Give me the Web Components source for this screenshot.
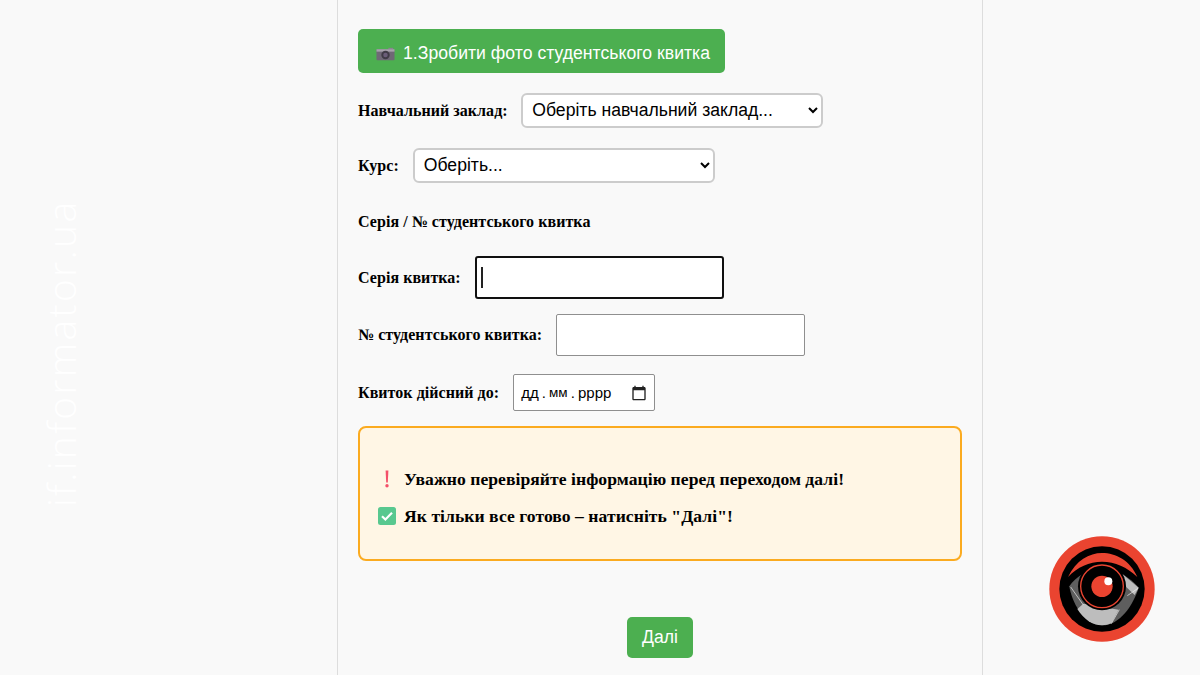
<!DOCTYPE html>
<html lang="uk">
<head>
<meta charset="utf-8">
<title>Студентський квиток</title>
<style>
  html, body { margin: 0; height: 675px; overflow: hidden; background: #f9f9f9; }
  body { font-family: "Liberation Serif", "Times New Roman", serif; color: #000; }
</style>
</head>
<body>
<ticket-page>
  <green-button icon="camera" size="wide">1.Зробити фото студентського квитка</green-button>

  <form-row label="Навчальний заклад:" style="margin-top:20px">
    <choice-field text="Оберіть навчальний заклад..." style="margin-left:-.4px"></choice-field>
  </form-row>
  <form-row label="Курс:" style="margin-top:20px">
    <choice-field text="Оберіть..."></choice-field>
  </form-row>

  <form-row label="Серія / № студентського квитка" style="margin-top:30px"></form-row>

  <form-row label="Серія квитка:" style="margin-top:25px">
    <text-field focused></text-field>
  </form-row>
  <form-row label="№ студентського квитка:" style="margin-top:15px">
    <text-field></text-field>
  </form-row>
  <form-row label="Квиток дійсний до:" style="margin-top:18px">
    <date-field></date-field>
  </form-row>

  <note-box style="margin-top:15px">
    <note-line icon="warn">Уважно перевіряйте інформацію перед переходом далі!</note-line>
    <note-line icon="check">Як тільки все готово – натисніть "Далі"!</note-line>
  </note-box>

  <next-bar style="margin-top:56px">
    <green-button>Далі</green-button>
  </next-bar>
</ticket-page>
<site-mark></site-mark>
<eye-logo></eye-logo>

<script>
const ICONS = {
  camera: `<svg width="19" height="14" viewBox="0 0 20 14">
    <rect x="13" y="0.5" width="5" height="2" fill="#8a8490"/>
    <rect x="0.5" y="2" width="19" height="11.5" rx="1" fill="#6f6876"/>
    <rect x="0.5" y="2" width="19" height="2.5" fill="#a8a2ad"/>
    <circle cx="10" cy="8" r="4.4" fill="#3f3a46"/>
    <circle cx="10" cy="8" r="2.4" fill="#6a5d78"/>
  </svg>`,
  warn: `<svg width="18" height="18" viewBox="0 0 18 18">
    <path d="M7.6 0.5h2.8L9.8 12.4H8.2z" fill="#f4506a"/>
    <circle cx="9" cy="15.7" r="1.7" fill="#f4506a"/>
  </svg>`,
  check: `<svg width="18" height="18" viewBox="0 0 18 18">
    <rect width="18" height="18" rx="2.5" fill="#58c88f"/>
    <path d="M4 9.2l3.4 3.3L14 5.8" fill="none" stroke="#fff" stroke-width="2.2"/>
  </svg>`
};

class TicketPage extends HTMLElement {
  connectedCallback() {
    this.attachShadow({ mode: 'open' }).innerHTML = `
      <style>
        :host { display: grid; grid-template-columns: 337px 646px 1fr; height: 675px; }
        .col {
          grid-column: 2;
          box-sizing: border-box;
          border-left: 1px solid #ddd;
          border-right: 1px solid #ddd;
          padding: 29px 20px 0;
          display: flex;
          flex-direction: column;
          align-items: stretch;
        }
      </style>
      <main class="col"><slot></slot></main>
    `;
  }
}

class GreenButton extends HTMLElement {
  connectedCallback() {
    const icon = this.getAttribute('icon');
    this.attachShadow({ mode: 'open' }).innerHTML = `
      <style>
        :host { display: block; width: fit-content; }
        button {
          display: flex;
          align-items: center;
          gap: 8px;
          border: 0;
          border-radius: 5px;
          background: #4caf50;
          color: #fff;
          font: 17.6px "Liberation Sans", Arial, sans-serif;
          padding: 0 15px;
          height: 41px;
        }
        :host([size=wide]) button { height: 44px; padding: 5px 15px 0 18px; letter-spacing: .03px; }
        svg { display: block; }
      </style>
      <button type="button">${icon ? ICONS[icon] : ''}<slot></slot></button>
    `;
  }
}

class FormRow extends HTMLElement {
  connectedCallback() {
    this.attachShadow({ mode: 'open' }).innerHTML = `
      <style>
        :host { display: flex; align-items: center; gap: 14px; }
        label { font: bold 16px/18px "Liberation Serif", "Times New Roman", serif; letter-spacing: .05px; }
      </style>
      <label>${this.getAttribute('label')}</label>
      <slot></slot>
    `;
  }
}

class ChoiceField extends HTMLElement {
  connectedCallback() {
    this.attachShadow({ mode: 'open' }).innerHTML = `
      <style>
        :host { display: block; }
        select {
          display: block;
          box-sizing: border-box;
          width: 302px;
          height: 35px;
          padding: 0 5px 2px;
          background: #fff;
          color: #000;
          border: 2px solid #ccc;
          border-radius: 6px;
          font: 17.6px "Liberation Sans", Arial, sans-serif;
        }
      </style>
      <select><option>${this.getAttribute('text')}</option></select>
    `;
  }
}

class TextField extends HTMLElement {
  connectedCallback() {
    this.attachShadow({ mode: 'open' }).innerHTML = `
      <style>
        :host { display: block; position: relative; }
        input {
          display: block;
          box-sizing: border-box;
          width: 249px;
          height: 42px;
          padding: 0 6px;
          background: #fff;
          border: 1px solid #8f8f8f;
          border-radius: 2px;
          font: 17.6px "Liberation Sans", Arial, sans-serif;
        }
        :host([focused]) input { height: 43px; border: 2px solid #101010; border-radius: 3px; }
        .caret { display: none; position: absolute; left: 6px; top: 11px; width: 2px; height: 21px; background: #222; }
        :host([focused]) .caret { display: block; }
      </style>
      <input type="text"><span class="caret"></span>
    `;
  }
}

class DateField extends HTMLElement {
  connectedCallback() {
    this.attachShadow({ mode: 'open' }).innerHTML = `
      <style>
        :host {
          display: flex;
          align-items: center;
          box-sizing: border-box;
          width: 142px;
          height: 37px;
          padding: 0 7px 0 7px;
          background: #fff;
          border: 1px solid #8f8f8f;
          border-radius: 2px;
          font: 15px "Liberation Sans", Arial, sans-serif;
          color: #000;
        }
        .v { display: flex; align-items: center; gap: 3.1px; }
        .sm { font-size: 13.5px; }
        svg { margin-left: auto; display: block; }
      </style>
      <span class="v"><span>дд</span><span>.</span><span class="sm">мм</span><span>.</span><span>рррр</span></span>
      <svg width="16" height="16" viewBox="0 0 24 24" fill="#222"><path d="M20 3h-1V1h-2v2H7V1H5v2H4c-1.1 0-2 .9-2 2v16c0 1.1.9 2 2 2h16c1.1 0 2-.9 2-2V5c0-1.1-.9-2-2-2zm0 18H4V8h16v13z"/></svg>
    `;
  }
}

class NoteBox extends HTMLElement {
  connectedCallback() {
    this.attachShadow({ mode: 'open' }).innerHTML = `
      <style>
        :host {
          display: flex;
          flex-direction: column;
          gap: 17px;
          box-sizing: border-box;
          height: 135px;
          padding: 41px 18px 0;
          background: #fff6e5;
          border: 2px solid #fbab20;
          border-radius: 8px;
        }
      </style>
      <slot></slot>
    `;
  }
}

class NoteLine extends HTMLElement {
  connectedCallback() {
    this.attachShadow({ mode: 'open' }).innerHTML = `
      <style>
        :host {
          display: flex;
          align-items: center;
          gap: 8px;
          font: bold 17.6px/20px "Liberation Serif", "Times New Roman", serif;
          letter-spacing: .05px;
        }
        svg { display: block; flex: none; }
      </style>
      ${ICONS[this.getAttribute('icon')]}<span><slot></slot></span>
    `;
  }
}

class NextBar extends HTMLElement {
  connectedCallback() {
    this.attachShadow({ mode: 'open' }).innerHTML = `
      <style>:host { display: flex; justify-content: center; }</style>
      <slot></slot>
    `;
  }
}

class SiteMark extends HTMLElement {
  connectedCallback() {
    this.attachShadow({ mode: 'open' }).innerHTML = `
      <style>
        :host {
          position: absolute;
          left: 38px;
          top: 198px;
          height: 310px;
          width: 46px;
          display: flex;
          justify-content: center;
          font: 300 39px/46px "Open Sans", sans-serif;
          letter-spacing: 2.3px;
          color: #fff;
          writing-mode: vertical-rl;
          transform: rotate(180deg);
          white-space: nowrap;
        }
      </style>
      if.informator.ua
    `;
  }
}

class EyeLogo extends HTMLElement {
  connectedCallback() {
    this.attachShadow({ mode: 'open' }).innerHTML = `
      <style>
        :host { position: absolute; left: 1049px; top: 536px; width: 106px; height: 106px; }
        svg { display: block; }
      </style>
      <svg width="106" height="106" viewBox="27 19 318 318">
        <circle cx="186" cy="178" r="158" fill="#ea4430"/>
        <circle cx="186" cy="178" r="128" fill="#000"/>
        <path d="M84 142C108 92 148 70 186 70C228 70 270 92 292 142C260 112 226 96 186 96C148 96 112 112 84 142Z" fill="#ea4430"/>
        <path d="M88 170C98 155 110 145 126 134L248 134C266 145 282 158 296 174C280 225 240 287 186 287C130 287 95 215 88 170Z" fill="#5e5e5e"/>
        <path d="M112 238C132 270 158 287 186 287C196 287 206 285 214 281L236 240L130 222Z" fill="#bdbdbd"/>
        <path d="M248 134L296 174L284 196L246 160Z" fill="#bdbdbd"/>
        <path d="M214 282L238 240M92 172L130 226M262 198L294 176" stroke="#f0f0f0" stroke-width="2"/>
        <circle cx="186" cy="170" r="72" fill="#000"/>
        <circle cx="186" cy="170" r="64" fill="none" stroke="#ea4430" stroke-width="4"/>
        <circle cx="186" cy="170" r="32" fill="#ea4430"/>
        <circle cx="205" cy="155" r="12" fill="#fff"/>
      </svg>
    `;
  }
}

customElements.define('ticket-page', TicketPage);
customElements.define('green-button', GreenButton);
customElements.define('form-row', FormRow);
customElements.define('choice-field', ChoiceField);
customElements.define('text-field', TextField);
customElements.define('date-field', DateField);
customElements.define('note-box', NoteBox);
customElements.define('note-line', NoteLine);
customElements.define('next-bar', NextBar);
customElements.define('site-mark', SiteMark);
customElements.define('eye-logo', EyeLogo);
</script>
</body>
</html>
